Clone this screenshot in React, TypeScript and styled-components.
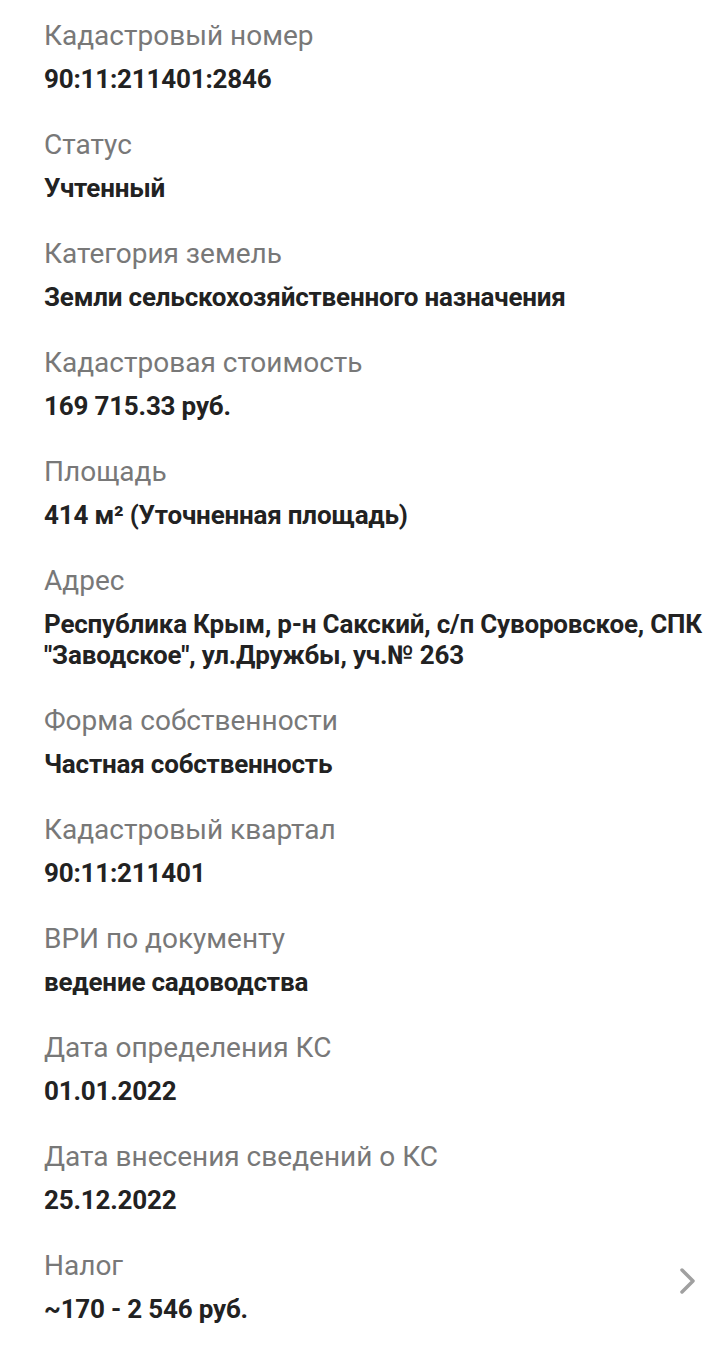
import React from 'react';
import styled, { createGlobalStyle } from 'styled-components';

const GlobalStyle = createGlobalStyle`
    html, body {
        margin: 0;
        padding: 0;
        background: #fff;
    }
    body {
        font-family: Roboto, "Noto Sans", "Liberation Sans", sans-serif;
        -webkit-font-smoothing: antialiased;
    }
`;

const Page = styled.div`
    width: 720px;
    min-height: 1346px;
    box-sizing: border-box;
    padding: 18px 0 0 44px;
    background: #fff;
`;

const FieldList = styled.dl`
    display: flex;
    flex-direction: column;
    gap: 32px;
    margin: 0;
`;

const FieldRow = styled.div`
    display: flex;
    align-items: center;
`;

const FieldBody = styled.div`
    flex: 1;
    display: flex;
    flex-direction: column;
    gap: 10px;
`;

const Label = styled.dt`
    font-size: 28px;
    line-height: 36px;
    color: #787878;
    font-weight: 400;
`;

const Value = styled.dd`
    margin: 0;
    font-size: 26px;
    line-height: 31px;
    font-weight: 700;
    color: #222;
    letter-spacing: -0.2px;
`;

const Chevron = styled.svg`
    width: 24px;
    height: 30px;
    flex-shrink: 0;
    margin: -12px 20px 0 0;
`;

interface FieldProps {
    label: string,
    value: string,
    link?: boolean,
}
function Field(props: FieldProps) {
    return (
        <FieldRow>
            <FieldBody>
                <Label>{props.label}</Label>
                <Value>{props.value}</Value>
            </FieldBody>
            {props.link && (
                <Chevron viewBox="0 0 24 30">
                    <path d="M6 4 L17 15 L6 26" fill="none" stroke="#a0a0a0" strokeWidth="3.5" strokeLinecap="round" strokeLinejoin="round" />
                </Chevron>
            )}
        </FieldRow>
    );
}

const fields: FieldProps[] = [
    { label: 'Кадастровый номер', value: '90:11:211401:2846' },
    { label: 'Статус', value: 'Учтенный' },
    { label: 'Категория земель', value: 'Земли сельскохозяйственного назначения' },
    { label: 'Кадастровая стоимость', value: '169 715.33 руб.' },
    { label: 'Площадь', value: '414 м² (Уточненная площадь)' },
    { label: 'Адрес', value: 'Республика Крым, р-н Сакский, с/п Суворовское, СПК "Заводское", ул.Дружбы, уч.№ 263' },
    { label: 'Форма собственности', value: 'Частная собственность' },
    { label: 'Кадастровый квартал', value: '90:11:211401' },
    { label: 'ВРИ по документу', value: 'ведение садоводства' },
    { label: 'Дата определения КС', value: '01.01.2022' },
    { label: 'Дата внесения сведений о КС', value: '25.12.2022' },
    { label: 'Налог', value: '~170 - 2 546 руб.', link: true },
];

export default function App() {
    return (
        <>
            <GlobalStyle />
            <Page>
                <FieldList>
                    {fields.map((f) => (
                        <Field key={f.label} {...f} />
                    ))}
                </FieldList>
            </Page>
        </>
    );
}
